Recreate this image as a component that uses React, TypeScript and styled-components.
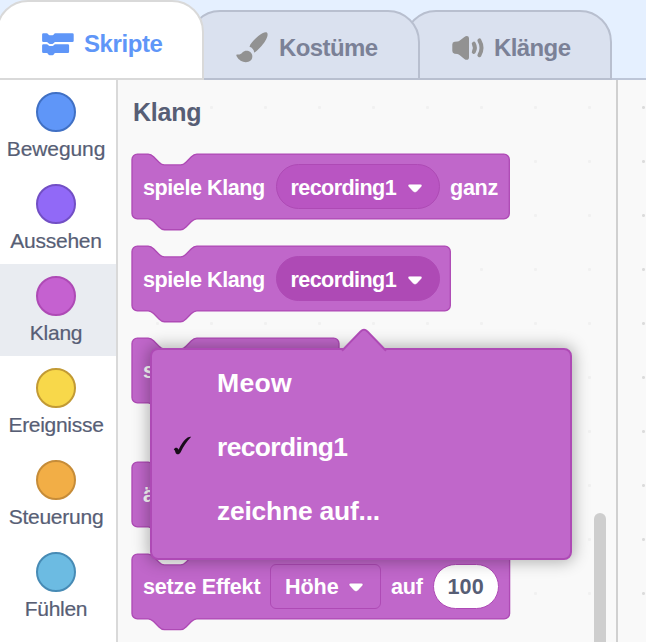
import React from 'react';
import styled, { createGlobalStyle } from 'styled-components';

const GlobalStyle = createGlobalStyle`
  * { box-sizing: border-box; }
  body { margin: 0; overflow: hidden; font-family: "Liberation Sans", Arial, sans-serif; }
`;

const Editor = styled.div`
  width: 646px;
  height: 642px;
  overflow: hidden;
  display: flex;
  flex-direction: column;
  background: #f9f9f9;
`;

const TabBar = styled.div`
  display: flex;
  align-items: flex-end;
  height: 80px;
  flex: none;
  padding-right: 34px;
  background: linear-gradient(#bdc6d8, #bdc6d8) bottom / 100% 2px no-repeat, #e5f0ff;
`;

const Tab = styled.div<{ $width: number; $selected?: boolean; $layer: number; $pad: number; $gap: number }>`
  position: relative;
  z-index: ${p => p.$layer};
  flex: none;
  display: flex;
  align-items: center;
  gap: ${p => p.$gap}px;
  width: ${p => p.$width}px;
  height: ${p => (p.$selected ? 80 : 70)}px;
  margin-left: ${p => (p.$selected ? -4 : -16)}px;
  padding-left: ${p => p.$pad}px;
  padding-top: ${p => (p.$selected ? 8 : 6)}px;
  border: 2px solid ${p => (p.$selected ? '#d9d9d9' : '#b8bfcf')};
  border-radius: 32px 32px 0 0;
  background: ${p => (p.$selected ? '#fff' : '#dae1ef')};
  color: ${p => (p.$selected ? '#5f96f8' : '#7b8197')};
`;

const TabText = styled.span<{ $track: number }>`
  font-size: 24px;
  line-height: 28px;
  font-weight: 700;
  letter-spacing: ${p => p.$track}px;
  white-space: nowrap;
`;

const Body = styled.div`
  display: flex;
  flex: 1;
  min-height: 0;
`;

const Sidebar = styled.div`
  flex: none;
  width: 118px;
  border-right: 2px solid #d9d9d9;
  background: #fff;
`;

const Category = styled.div<{ $active?: boolean }>`
  display: flex;
  flex-direction: column;
  align-items: center;
  height: 92px;
  padding: 12px 4px 0 0;
  background: ${p => (p.$active ? '#e9ecf1' : 'transparent')};
`;

const Bubble = styled.div<{ $fill: string; $edge: string }>`
  width: 40px;
  height: 40px;
  border-radius: 50%;
  border: 2px solid ${p => p.$edge};
  background: ${p => p.$fill};
`;

const CategoryName = styled.div<{ $track: number }>`
  margin-top: 5px;
  font-size: 21px;
  line-height: 24px;
  letter-spacing: ${p => p.$track}px;
  color: #575e75;
  -webkit-text-stroke: 0.2px #575e75;
  white-space: nowrap;
`;

const Flyout = styled.div`
  position: relative;
  flex: none;
  width: 500px;
  padding-left: 14px;
  border-right: 2px solid #d0d0d0;
  background: radial-gradient(circle at 1.5px 1.5px, #f1f1f1 1.3px, transparent 1.7px) 38px 26px / 54px 54px #f9f9f9;
`;

const Workspace = styled.div`
  flex: 1;
  background: radial-gradient(circle at 1.5px 1.5px, #dcdcdc 1.2px, transparent 1.7px) 24px 26px / 54px 54px #f9f9f9;
`;

const Heading = styled.div`
  height: 74px;
  padding: 18px 0 0 1px;
  font-size: 25px;
  line-height: 28px;
  letter-spacing: -0.25px;
  font-weight: 700;
  color: #575e75;
`;

const BlockBox = styled.div<{ $gap?: number; $drop?: boolean }>`
  position: relative;
  display: flex;
  align-items: center;
  height: 65px;
  margin-bottom: ${p => p.$gap ?? 27}px;
  padding: ${p => (p.$drop ? 2 : 1)}px 0 0 11px;
  color: #fff;
`;

const BlockShape = styled.svg`
  position: absolute;
  left: 0;
  top: 0;
  width: 400px;
  height: 80px;
  overflow: visible;
`;

const BlockText = styled.span<{ $width: number; $track?: number }>`
  position: relative;
  flex: none;
  width: ${p => p.$width}px;
  font-size: 21.6px;
  line-height: 26px;
  font-weight: 700;
  letter-spacing: ${p => p.$track ?? -0.45}px;
  white-space: nowrap;
`;

const Field = styled.div<{ $width: number; $kind: 'round' | 'open' | 'square' | 'number'; $drop?: boolean }>`
  position: relative;
  flex: none;
  display: flex;
  align-items: center;
  width: ${p => p.$width}px;
  height: 45px;
  margin-bottom: ${p => (p.$drop ? 2 : 1)}px;
  padding: ${p => (p.$drop ? 2 : 1)}px 0 0 14px;
  border: 1.35px solid #ae4ab5;
  border-radius: ${p => (p.$kind === 'square' ? 6 : 23)}px;
  background: ${p => ({ round: '#b955c2', open: '#ae4ab5', square: 'transparent', number: '#fff' })[p.$kind]};
  color: ${p => (p.$kind === 'number' ? '#575e75' : '#fff')};
`;

const Spacer = styled.div<{ $w: number }>`
  flex: none;
  width: ${p => p.$w}px;
`;

const Caret = styled.svg`
  flex: none;
  width: 16px;
  height: 11px;
  margin-top: 1px;
  overflow: visible;
`;

const Scrollbar = styled.div`
  position: absolute;
  right: 10px;
  top: 433px;
  width: 12px;
  height: 200px;
  border-radius: 6px;
  background: #cecece;
`;

const Menu = styled.div`
  position: absolute;
  z-index: 5;
  left: 32px;
  top: 268px;
  width: 422px;
  height: 212px;
  padding-top: 1px;
  border: 2px solid #ae4ab5;
  border-radius: 8px;
  background: #c067ca;
  box-shadow: 0 0 16px 2px rgba(0, 0, 0, 0.3);
`;

const MenuArrow = styled.svg`
  position: absolute;
  left: 188px;
  top: -22px;
  width: 48px;
  height: 24px;
`;

const MenuItem = styled.div<{ $size: number; $track: number }>`
  display: flex;
  align-items: center;
  height: 64px;
  padding-left: 20px;
  font-size: ${p => p.$size}px;
  line-height: 30px;
  font-weight: 700;
  letter-spacing: ${p => p.$track}px;
  color: #fff;
  white-space: nowrap;
`;

const CheckSlot = styled.div`
  flex: none;
  display: flex;
  width: 45px;
  margin-top: -2px;
`;

const Icon = styled.svg`
  flex: none;
  overflow: visible;
`;

function BlockOutline({ width }: { width: number }) {
  const right = width / 1.35 - 4;
  return (
    <BlockShape>
      <path
        transform="translate(0 0.1) scale(1.35)"
        fill="#c067ca"
        stroke="#ae4ab5"
        d={`M0,4 A4,4 0 0,1 4,0 H12 c2,0 3,1 4,2 l4,4 c1,1 2,2 4,2 h12 c2,0 3,-1 4,-2 l4,-4 c1,-1 2,-2 4,-2 H${right} a4,4 0 0,1 4,4 v40 a4,4 0 0,1 -4,4 H48 c-2,0 -3,1 -4,2 l-4,4 c-1,1 -2,2 -4,2 h-12 c-2,0 -3,-1 -4,-2 l-4,-4 c-1,-1 -2,-2 -4,-2 H4 a4,4 0 0,1 -4,-4 z`}
      />
    </BlockShape>
  );
}

function DropCaret() {
  return (
    <Caret viewBox="0 0 16 11">
      <path
        d="M2.6 1.2 H13.4 C15 1.2 15.4 2.7 14.4 3.8 L9.8 8.8 Q8 10.3 6.2 8.8 L1.6 3.8 C.6 2.7 1 1.2 2.6 1.2Z"
        fill="#fff"
        stroke="#a33fab"
        strokeOpacity=".45"
        strokeWidth="0.8"
      />
    </Caret>
  );
}

const categories = [
  { name: 'Bewegung', fill: '#5f96f8', edge: '#4070c4', track: -0.1 },
  { name: 'Aussehen', fill: '#9169f7', edge: '#724fc5', track: -0.25 },
  { name: 'Klang', fill: '#c561d0', edge: '#ae4ab5', track: -0.2 },
  { name: 'Ereignisse', fill: '#f8d84a', edge: '#c29a34', track: -0.3 },
  { name: 'Steuerung', fill: '#f2ae46', edge: '#c68c38', track: -0.25 },
  { name: 'Fühlen', fill: '#6cbbe2', edge: '#478bb5', track: -0.3 },
];

export default function App() {
  return (
    <Editor>
      <GlobalStyle />
      <TabBar>
        <Tab $width={208} $selected $layer={3} $pad={44} $gap={10}>
          <Icon width="32" height="23" viewBox="0 0 32 23" fill="#5f96f8">
            <path d="M1.4 .2 H4.6 C6 .2 6.4 2.3 7.8 2.3 H10.4 C11.8 2.3 12 .2 13.4 .2 H30.4 Q31.7 .2 31.7 1.5 V7.7 Q31.7 9 30.4 9 H13.4 C12 9 11.8 10.9 10.4 10.9 H7.8 C6.4 10.9 6 9 4.6 9 H1.4 Q.1 9 .1 7.7 V1.5 Q.1 .2 1.4 .2Z" />
            <path d="M1.4 11.2 H4.6 C6 11.2 6.4 12.9 7.8 12.9 H10.4 C11.8 12.9 12 11.2 13.4 11.2 H25.8 Q27.1 11.2 27.1 12.5 V18.7 Q27.1 20 25.8 20 H13.4 C12 20 11.8 22.3 10.4 22.3 H7.8 C6.4 22.3 6 20 4.6 20 H1.4 Q.1 20 .1 18.7 V12.5 Q.1 11.2 1.4 11.2Z" />
          </Icon>
          <TabText $track={-0.42}>Skripte</TabText>
        </Tab>
        <Tab $width={232} $layer={2} $pad={46} $gap={11}>
          <Icon width="32" height="32" viewBox="0 0 32 32" fill="#929292">
            <path d="M30.8 .4 C32.4 1.6 31.5 5.2 29.2 9 C26.5 13.4 22 18.4 18.2 20.6 C18 17.8 16.2 15.6 13.5 14.8 C14.3 11.4 18.6 7.2 22.3 4 C25.8 1 29.4 -.5 30.8 .4Z" />
            <path d="M1 22.4 C3.4 23 4.8 22 6.4 20.4 C8.6 18.2 12 18.2 14.3 20 C17 22.2 17 26.4 14.6 28.6 C10.6 32 3.6 30 .8 24.6 C.2 23.4 .2 22.2 1 22.4Z" />
          </Icon>
          <TabText $track={-0.6}>Kostüme</TabText>
        </Tab>
        <Tab $width={208} $layer={1} $pad={46} $gap={10}>
          <Icon width="32" height="26" viewBox="0 0 32 26" fill="#929292">
            <path d="M.3 9.6 Q.3 7 2.6 6.8 L5.4 6.5 Q6.8 6.4 7.8 5.4 L12.4 1.9 C14.3 .3 17 .5 17 3.4 V22.4 C17 25.2 14.3 25.5 12.4 23.9 L7.8 20.2 Q6.8 19.3 5.4 19.1 L2.6 18.7 Q.3 18.4 .3 16Z" />
            <path d="M21.8 8.7 Q24 12.8 21.8 16.9 M27.4 5.4 Q31.6 12.8 27.4 20.2" fill="none" stroke="#929292" strokeWidth="4" strokeLinecap="round" />
          </Icon>
          <TabText $track={-0.6}>Klänge</TabText>
        </Tab>
      </TabBar>
      <Body>
        <Sidebar>
          {categories.map(c => (
            <Category key={c.name} $active={c.name === 'Klang'}>
              <Bubble $fill={c.fill} $edge={c.edge} />
              <CategoryName $track={c.track}>{c.name}</CategoryName>
            </Category>
          ))}
        </Sidebar>
        <Flyout>
          <Heading>Klang</Heading>
          <BlockBox $drop>
            <BlockOutline width={377.3} />
            <BlockText $width={132.5}>spiele Klang</BlockText>
            <Field $width={164.5} $kind="round" $drop>
              <BlockText $width={116} $track={-0.6}>recording1</BlockText>
              <DropCaret />
            </Field>
            <Spacer $w={10} />
            <BlockText $width={50} $track={-0.3}>ganz</BlockText>
          </BlockBox>
          <BlockBox $drop>
            <BlockOutline width={318.3} />
            <BlockText $width={132.5}>spiele Klang</BlockText>
            <Field $width={164.5} $kind="open" $drop>
              <BlockText $width={116} $track={-0.6}>recording1</BlockText>
              <DropCaret />
            </Field>
          </BlockBox>
          <BlockBox $gap={59}>
            <BlockOutline width={207} />
            <BlockText $width={12}>s</BlockText>
          </BlockBox>
          <BlockBox>
            <BlockOutline width={377.3} />
            <BlockText $width={12}>ä</BlockText>
          </BlockBox>
          <BlockBox>
            <BlockOutline width={377.6} />
            <BlockText $width={127} $track={-0.22}>setze Effekt</BlockText>
            <Field $width={111} $kind="square">
              <BlockText $width={63} $track={-0.1}>Höhe</BlockText>
              <DropCaret />
            </Field>
            <Spacer $w={10} />
            <BlockText $width={41.5} $track={-0.2}>auf</BlockText>
            <Field $width={66} $kind="number">
              <BlockText $width={40} $track={0.1}>100</BlockText>
            </Field>
          </BlockBox>
          <Scrollbar />
          <Menu>
            <MenuArrow viewBox="0 0 48 24">
              <path d="M2 22 L20.6 3.6 Q24 .6 27.4 3.6 L46 22 V24 H2Z" fill="#c067ca" />
              <path d="M2 22.8 L20.6 3.4 Q24 .2 27.4 3.4 L46 22.8" fill="none" stroke="#ae4ab5" strokeWidth="2" />
            </MenuArrow>
            <MenuItem $size={26.6} $track={0.3}><CheckSlot />Meow</MenuItem>
            <MenuItem $size={26.4} $track={-0.62}>
              <CheckSlot>
                <Icon width="20" height="22" viewBox="0 0 20 22">
                  <path d="M1.8 14.6 C3 12.2 5.4 12.2 6.6 14.8 C9.2 9.4 12.4 4.6 15.6 2.6 Q17.4 1.6 19.2 1.8 C14.4 6.8 11.4 11.8 8.8 17 C7.4 19.8 4.4 20 3.6 17.8 C3 16 2.8 15 1.8 14.6Z" fill="#180d19" />
                </Icon>
              </CheckSlot>
              recording1
            </MenuItem>
            <MenuItem $size={26.4} $track={-0.2}><CheckSlot />zeichne auf...</MenuItem>
          </Menu>
        </Flyout>
        <Workspace />
      </Body>
    </Editor>
  );
}
